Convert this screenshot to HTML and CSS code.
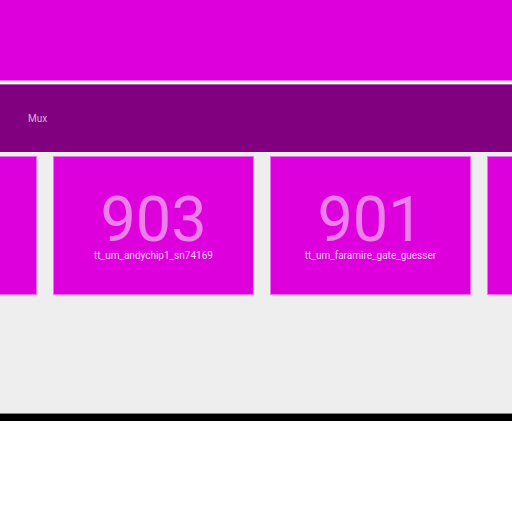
FILE: index.html
```html
<!DOCTYPE html>
<html>
<head>
<meta charset="utf-8">
<link rel="stylesheet" href="styles.css">
</head>
<body>
<div class="page">
  <div class="hero"></div>
  <div class="bar"><span class="bar-title">Mux</span></div>
  <div class="stage">
    <div class="track">
      <div class="card"></div>
      <div class="card"><div class="num">903</div><div class="label">tt_um_andychip1_sn74169</div></div>
      <div class="card"><div class="num">901</div><div class="label">tt_um_faramire_gate_guesser</div></div>
      <div class="card"></div>
    </div>
  </div>
  <div class="rule"></div>
</div>
</body>
</html>
```
FILE: styles.css
```css
html, body {
  margin: 0;
  padding: 0;
  background: #ffffff;
  font-family: Roboto, "Liberation Sans", sans-serif;
}
.page {
  width: 512px;
  overflow: hidden;
}
.hero {
  height: 80px;
  background: #dd00dd;
  border-bottom: 1px solid #ee80ee;
}
.bar {
  margin-top: 3px;
  height: 67px;
  background: #800080;
  border-top: 1px solid #b060b0;
  display: flex;
  align-items: center;
  padding-left: 28px;
}
.bar-title {
  color: rgba(255, 255, 255, 0.7);
  font-size: 10px;
}
.stage {
  background: #eeeeee;
  height: 257px;
  padding-top: 3px;
  border-top: 1px solid #f8f8f8;
  border-bottom: 1px solid #888888;
}
.track {
  display: flex;
  gap: 16px;
  margin-left: -164px;
}
.card {
  flex: 0 0 199px;
  height: 137px;
  background: #dd00dd;
  border: 1px solid #f070f0;
  display: flex;
  flex-direction: column;
  align-items: center;
  justify-content: center;
  color: rgba(255, 255, 255, 0.5);
}
.num {
  font-size: 63px;
  line-height: 50px;
  font-weight: 400;
  margin-top: 5px;
}
.label {
  font-size: 10px;
  line-height: 12px;
  margin-top: 5px;
  color: rgba(255, 255, 255, 0.8);
}
.rule {
  height: 7px;
  background: #000000;
}
```
